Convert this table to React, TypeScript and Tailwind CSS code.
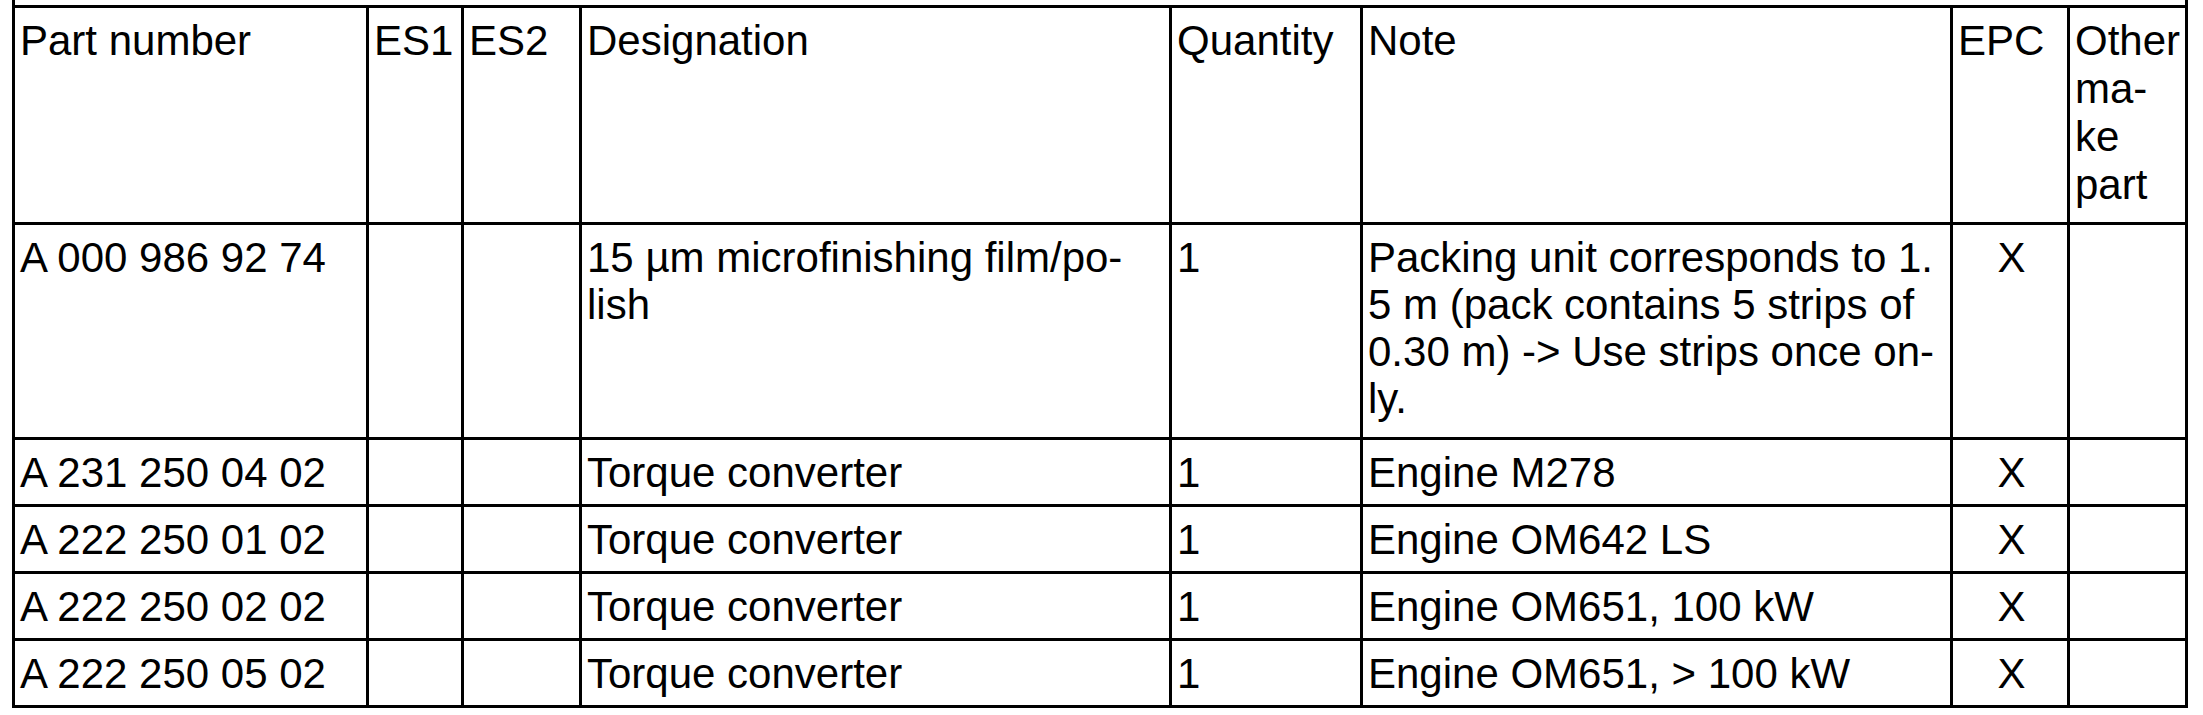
import React from "react";

type Row = {
  part: string;
  designation: React.ReactNode;
  qty: string;
  note: React.ReactNode;
  epc: string;
  tall?: boolean;
};

const rows: Row[] = [
  {
    part: "A 000 986 92 74",
    designation: (
      <>
        15 µm microfinishing film/po-
        <br />
        lish
      </>
    ),
    qty: "1",
    note: (
      <>
        Packing unit corresponds to 1.
        <br />
        5 m (pack contains 5 strips of
        <br />
        0.30 m) -&gt; Use strips once on-
        <br />
        ly.
      </>
    ),
    epc: "X",
    tall: true,
  },
  { part: "A 231 250 04 02", designation: "Torque converter", qty: "1", note: "Engine M278", epc: "X" },
  { part: "A 222 250 01 02", designation: "Torque converter", qty: "1", note: "Engine OM642 LS", epc: "X" },
  { part: "A 222 250 02 02", designation: "Torque converter", qty: "1", note: "Engine OM651, 100 kW", epc: "X" },
  { part: "A 222 250 05 02", designation: "Torque converter", qty: "1", note: "Engine OM651, > 100 kW", epc: "X" },
];

const cell = "border-[3px] border-black align-top pl-[5px] pr-[2px] pt-[9px] whitespace-nowrap";
const head = `${cell} text-left font-normal leading-[48px] pt-[8px]`;

export default function App() {
  return (
    <div
      className="w-[2203px] h-[715px] bg-white text-black text-[42px] leading-[47px] pl-[12px]"
      style={{ fontFamily: '"Liberation Sans", Arial, sans-serif' }}
    >
      {/* outer rules poke a few px above the top border, as in the scan */}
      <div className="w-[2176px] h-[5px] border-x-[3px] border-black" />
      <table className="table-fixed border-collapse w-[2176px]">
        <colgroup>
          <col className="w-[354px]" />
          <col className="w-[95px]" />
          <col className="w-[118px]" />
          <col className="w-[590px]" />
          <col className="w-[191px]" />
          <col className="w-[590px]" />
          <col className="w-[117px]" />
          <col className="w-[118px]" />
        </colgroup>
        <thead>
          <tr className="h-[217px]">
            <th className={head}>Part number</th>
            <th className={head}>ES1</th>
            <th className={head}>ES2</th>
            <th className={head}>Designation</th>
            <th className={head}>Quantity</th>
            <th className={head}>Note</th>
            <th className={head}>EPC</th>
            <th className={head}>
              Other
              <br />
              ma-
              <br />
              ke
              <br />
              part
            </th>
          </tr>
        </thead>
        <tbody>
          {rows.map((r) => (
            <tr key={r.part} className={r.tall ? "h-[215px]" : "h-[67px]"}>
              <td className={cell}>{r.part}</td>
              <td className={cell} />
              <td className={cell} />
              <td className={cell}>{r.designation}</td>
              <td className={cell}>{r.qty}</td>
              <td className={cell}>{r.note}</td>
              <td className={`${cell} text-center`}>{r.epc}</td>
              <td className={cell} />
            </tr>
          ))}
        </tbody>
      </table>
    </div>
  );
}
